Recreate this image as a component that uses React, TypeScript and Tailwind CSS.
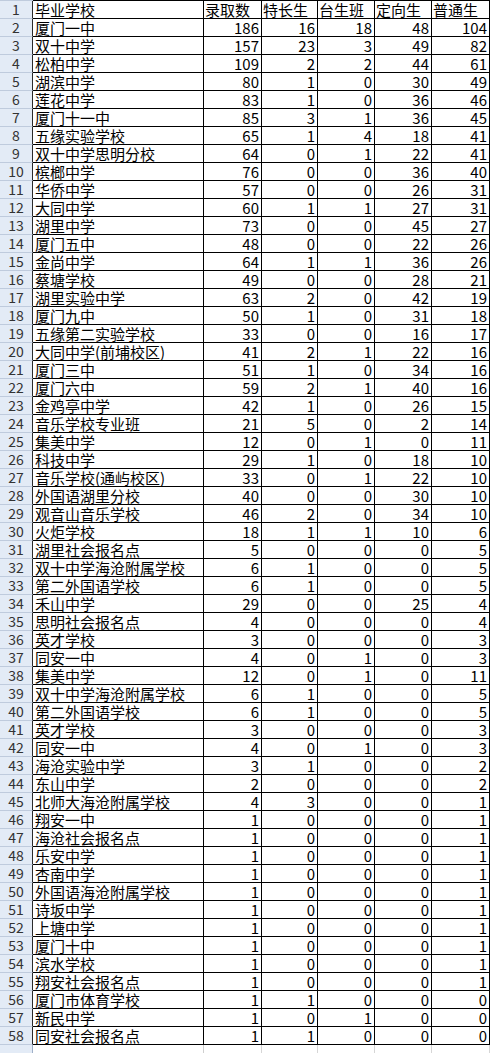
import React from "react";

type Row = [string, number, number, number, number, number];

const rows: Row[] = [
  ["厦门一中", 186, 16, 18, 48, 104],
  ["双十中学", 157, 23, 3, 49, 82],
  ["松柏中学", 109, 2, 2, 44, 61],
  ["湖滨中学", 80, 1, 0, 30, 49],
  ["莲花中学", 83, 1, 0, 36, 46],
  ["厦门十一中", 85, 3, 1, 36, 45],
  ["五缘实验学校", 65, 1, 4, 18, 41],
  ["双十中学思明分校", 64, 0, 1, 22, 41],
  ["槟榔中学", 76, 0, 0, 36, 40],
  ["华侨中学", 57, 0, 0, 26, 31],
  ["大同中学", 60, 1, 1, 27, 31],
  ["湖里中学", 73, 0, 0, 45, 27],
  ["厦门五中", 48, 0, 0, 22, 26],
  ["金尚中学", 64, 1, 1, 36, 26],
  ["蔡塘学校", 49, 0, 0, 28, 21],
  ["湖里实验中学", 63, 2, 0, 42, 19],
  ["厦门九中", 50, 1, 0, 31, 18],
  ["五缘第二实验学校", 33, 0, 0, 16, 17],
  ["大同中学(前埔校区)", 41, 2, 1, 22, 16],
  ["厦门三中", 51, 1, 0, 34, 16],
  ["厦门六中", 59, 2, 1, 40, 16],
  ["金鸡亭中学", 42, 1, 0, 26, 15],
  ["音乐学校专业班", 21, 5, 0, 2, 14],
  ["集美中学", 12, 0, 1, 0, 11],
  ["科技中学", 29, 1, 0, 18, 10],
  ["音乐学校(通屿校区)", 33, 0, 1, 22, 10],
  ["外国语湖里分校", 40, 0, 0, 30, 10],
  ["观音山音乐学校", 46, 2, 0, 34, 10],
  ["火炬学校", 18, 1, 1, 10, 6],
  ["湖里社会报名点", 5, 0, 0, 0, 5],
  ["双十中学海沧附属学校", 6, 1, 0, 0, 5],
  ["第二外国语学校", 6, 1, 0, 0, 5],
  ["禾山中学", 29, 0, 0, 25, 4],
  ["思明社会报名点", 4, 0, 0, 0, 4],
  ["英才学校", 3, 0, 0, 0, 3],
  ["同安一中", 4, 0, 1, 0, 3],
  ["集美中学", 12, 0, 1, 0, 11],
  ["双十中学海沧附属学校", 6, 1, 0, 0, 5],
  ["第二外国语学校", 6, 1, 0, 0, 5],
  ["英才学校", 3, 0, 0, 0, 3],
  ["同安一中", 4, 0, 1, 0, 3],
  ["海沧实验中学", 3, 1, 0, 0, 2],
  ["东山中学", 2, 0, 0, 0, 2],
  ["北师大海沧附属学校", 4, 3, 0, 0, 1],
  ["翔安一中", 1, 0, 0, 0, 1],
  ["海沧社会报名点", 1, 0, 0, 0, 1],
  ["乐安中学", 1, 0, 0, 0, 1],
  ["杏南中学", 1, 0, 0, 0, 1],
  ["外国语海沧附属学校", 1, 0, 0, 0, 1],
  ["诗坂中学", 1, 0, 0, 0, 1],
  ["上塘中学", 1, 0, 0, 0, 1],
  ["厦门十中", 1, 0, 0, 0, 1],
  ["滨水学校", 1, 0, 0, 0, 1],
  ["翔安社会报名点", 1, 0, 0, 0, 1],
  ["厦门市体育学校", 1, 1, 0, 0, 0],
  ["新民中学", 1, 0, 1, 0, 0],
  ["同安社会报名点", 1, 1, 0, 0, 0],
];

const headers = ["录取数", "特长生", "台生班", "定向生", "普通生"];
const numW = ["w-[58px]", "w-[56px]", "w-[57px]", "w-[57px]", "w-[58px]"];

const font = {
  fontFamily: '"Noto Sans CJK SC", "Noto Sans", sans-serif',
};

function RowHead({ n }: { n: number }) {
  return (
    <div className="w-[33px] h-[18px] shrink-0 bg-[#e3ebf6] border-b border-b-[#bfcbdd] border-r border-r-[#2b2b2b] flex items-center justify-center text-[14px] leading-[17px] text-[#333333]">
      {n}
    </div>
  );
}

export default function App() {
  return (
    <div className="w-[491px] min-h-[1053px] bg-white text-black" style={font}>
      <div className="flex h-px">
        <div className="w-[33px] bg-[#bfcbdd]" />
        <div className="w-[457px] bg-black" />
      </div>
      <div className="flex">
        <RowHead n={1} />
        <div className="w-[171px] h-[18px] shrink-0 border-b border-r border-black pl-[2px] text-[15px] leading-[17px]">
          毕业学校
        </div>
        {headers.map((h, i) => (
          <div
            key={h}
            className={`${numW[i]} h-[18px] shrink-0 border-b border-r border-black pl-[1px] text-[15px] leading-[17px] whitespace-nowrap`}
          >
            {h}
          </div>
        ))}
      </div>
      {rows.map((r, idx) => (
        <div key={idx} className="flex">
          <RowHead n={idx + 2} />
          <div className="w-[171px] h-[18px] shrink-0 border-b border-r border-black pl-[2px] text-[15px] leading-[17px] whitespace-nowrap">
            {r[0]}
          </div>
          {[r[1], r[2], r[3], r[4], r[5]].map((v, i) => (
            <div
              key={i}
              className={`${numW[i]} h-[18px] shrink-0 border-b border-r border-black pr-[2px] text-right text-[15px] leading-[17px]`}
            >
              {v}
            </div>
          ))}
        </div>
      ))}
      <div className="flex h-[8px]">
        <div className="w-[33px] shrink-0 bg-[#e3ebf6] border-r border-r-[#9fb0c8]" />
        <div className="w-[171px] shrink-0 border-r border-r-[#cfcfcf]" />
        {numW.map((w, i) => (
          <div key={i} className={`${w} shrink-0 border-r border-r-[#d6d6d6]`} />
        ))}
      </div>
    </div>
  );
}
